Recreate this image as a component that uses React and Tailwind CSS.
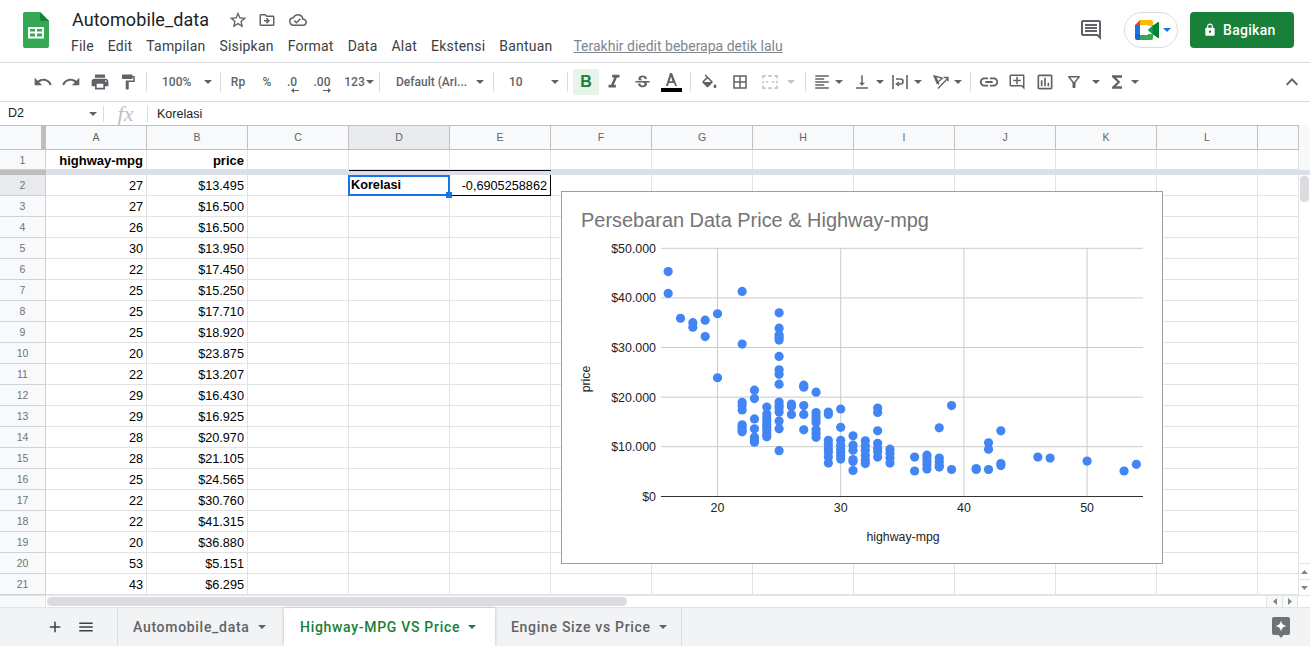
import React from 'react';
import {
  MdUndo, MdRedo, MdPrint, MdFormatPaint, MdFormatItalic, MdStrikethroughS, MdBorderAll,
  MdFormatAlignLeft, MdVerticalAlignBottom, MdLink, MdOutlineAddComment, MdOutlineAssessment,
  MdOutlineFilterAlt, MdFunctions, MdExpandLess, MdLock, MdOutlineComment, MdStarBorder,
  MdOutlineDriveFileMove, MdOutlineCloudDone, MdAdd, MdMenu,
} from 'react-icons/md';

const roboto = "font-['Roboto',sans-serif]";
const arial = "font-['Liberation_Sans',Arial,sans-serif]";

const Caret = ({ className = 'fill-[#5f6368]' }) => (
  <svg width="8" height="4" viewBox="0 0 8 4" className={`shrink-0 ${className}`}><path d="M0 0h8L4 4z" /></svg>
);
const Sep = () => <div className="w-px h-5 bg-[#dadce0] shrink-0" />;
const Slot = ({ className = '', children }) => (
  <div className={`flex items-center justify-center shrink-0 text-[#5f6368] ${className}`}>{children}</div>
);

const SheetsLogo = () => (
  <svg width="26" height="36" viewBox="0 0 26 36">
    <path d="M2 0h15l9 9v25a2 2 0 0 1-2 2H2a2 2 0 0 1-2-2V2a2 2 0 0 1 2-2z" fill="#34a853" />
    <path d="M17 0l9 9h-7a2 2 0 0 1-2-2z" fill="#188038" />
    <path d="M5 15h16v11.5H5zm2 2v2.6h5V17zm7 0v2.6h5V17zM7 21.6v2.9h5v-2.9zm7 0v2.9h5v-2.9z" fill="#fff" fillRule="evenodd" />
  </svg>
);

const MeetLogo = () => (
  <svg width="24" height="20" viewBox="0 0 24 20">
    <path d="M5 0h11a2 2 0 0 1 2 2v4h-5V5H5z" fill="#fbbc04" />
    <path d="M5 0v5H0z" fill="#ea4335" />
    <path d="M0 5h5v9H0z" fill="#1a73e8" />
    <path d="M0 14h5v6H2a2 2 0 0 1-2-2z" fill="#1967d2" />
    <path d="M5 15h8v-1h5v4a2 2 0 0 1-2 2H5z" fill="#34a853" />
    <path d="M13 10l5-4.4 5-3.6a.6.6 0 0 1 1 .5v15a.6.6 0 0 1-1 .5l-5-3.6z" fill="#00832d" />
    <path d="M13 10l5-4.400V14.400z" fill="#0f9d58" />
  </svg>
);

const Header = () => (
  <div className="h-[63px] flex border-b border-[#dadce0] shrink-0">
    <div className="w-[72px] pl-[23px] pt-[12px] shrink-0"><SheetsLogo /></div>
    <div className="flex-1 pt-[8px]">
      <div className="flex items-center h-[24px]">
        <div className={`${roboto} text-[18px] leading-[24px] tracking-[0.1px] text-[#202124] w-[155px]`}>Automobile_data</div>
        <div className="w-[22px] flex justify-center text-[#5f6368]"><MdStarBorder size={20} /></div>
        <div className="w-[36px] flex justify-center text-[#5f6368]"><MdOutlineDriveFileMove size={18} /></div>
        <div className="w-[26px] flex justify-center text-[#5f6368]"><MdOutlineCloudDone size={18} /></div>
      </div>
      <div className={`${roboto} flex items-center mt-[2px] h-[24px] text-[14px] tracking-[0.2px] text-[#3c4043] -ml-px gap-[14px]`}>
        <span>File</span><span>Edit</span><span>Tampilan</span><span>Sisipkan</span><span>Format</span>
        <span>Data</span><span>Alat</span><span>Ekstensi</span><span>Bantuan</span>
        <span className="ml-[7px] tracking-normal text-[#80868b] underline">Terakhir diedit beberapa detik lalu</span>
      </div>
    </div>
    <div className="flex items-start pt-[12px] shrink-0 pr-[16px]">
      <div className="h-[36px] flex items-center text-[#5f6368] mr-[21px]"><MdOutlineComment size={24} /></div>
      <div className="w-[54px] h-[36px] rounded-[18px] border border-[#dadce0] flex items-center pl-[10px] gap-[4px] mr-[12px]">
        <MeetLogo /><Caret className="fill-[#1a73e8]" />
      </div>
      <div className={`${roboto} w-[104px] h-[36px] rounded-[4px] bg-[#188038] text-white flex items-center pl-[13px] gap-[6px] text-[14px] font-medium tracking-[0.3px]`}>
        <MdLock size={14} /><span>Bagikan</span>
      </div>
    </div>
  </div>
);

const Toolbar = () => (
  <div className={`${roboto} h-[39px] flex items-center pl-[29px] border-b border-[#dadce0] shrink-0 text-[12px] font-medium text-[#5f6368]`}>
    <Slot className="w-[28px]"><MdUndo size={20} /></Slot>
    <Slot className="w-[28px]"><MdRedo size={20} /></Slot>
    <Slot className="w-[29px]"><MdPrint size={20} /></Slot>
    <Slot className="w-[28px] mr-[4px]"><MdFormatPaint size={18} /></Slot>
    <Sep />
    <Slot className="w-[73px] !justify-start pl-[15px] gap-[13px]"><span>100%</span><Caret /></Slot>
    <Sep />
    <Slot className="w-[34px]">Rp</Slot>
    <Slot className="w-[24px]">%</Slot>
    <Slot className="w-[26px] flex-col leading-[12px] pt-[4px]">
      <span>.0</span>
      <svg width="8" height="5" viewBox="0 0 8 5" className="fill-[#5f6368] ml-[5px]"><path d="M0 2.500L3 0v2h5v1H3v2z" /></svg>
    </Slot>
    <Slot className="w-[34px] flex-col leading-[12px] pt-[4px]">
      <span>.00</span>
      <svg width="8" height="5" viewBox="0 0 8 5" className="fill-[#5f6368] ml-[9px]"><path d="M8 2.500L5 0v2H0v1h5v2z" /></svg>
    </Slot>
    <Slot className="w-[40px] gap-[1px]"><span>123</span><Caret /></Slot>
    <Sep />
    <Slot className="w-[113px] !justify-start pl-[16px]"><span className="w-[80px]">Default (Ari...</span><Caret /></Slot>
    <Sep />
    <Slot className="w-[73px] !justify-start pl-[15px]"><span className="w-[42px]">10</span><Caret /></Slot>
    <Sep />
    <Slot className="w-[26px] h-[26px] ml-[5px] rounded-[2px] bg-[#e6f4ea] text-[#188038]">
      <span className={`${arial} text-[16px] font-bold`}>B</span>
    </Slot>
    <Slot className="w-[28px] ml-px"><MdFormatItalic size={22} /></Slot>
    <Slot className="w-[28px]"><MdStrikethroughS size={19} /></Slot>
    <Slot className="w-[28px] ml-px flex-col">
      <svg width="14" height="14" viewBox="0 0 14 14" className="fill-[#5f6368]"><path d="M6 0h2l5 13h-1.900l-1.100-3H5l-1.100 3H2zm-.4 8.300h2.800L7 3.500z" fill="#5f6368" /></svg>
      <div className="w-[21px] h-[4px] bg-black mt-[1px]" />
    </Slot>
    <div className="w-[5px] shrink-0" />
    <Sep />
    <Slot className="w-[28px] ml-[4px]">
      <svg width="18" height="18" viewBox="0 0 24 24" className="fill-[#5f6368]"><path d="M16.560 10.940 7.620 2 6.210 3.410l2.380 2.380-5.150 5.150c-.59.590-.59 1.540 0 2.120l5.500 5.500c.29.29.68.44 1.060.44s.77-.15 1.060-.44l5.500-5.500c.59-.58.59-1.530 0-2.110zM10 7.210 14.790 12H5.210zM20 14.500s-2 2.170-2 3.500c0 1.100.9 2 2 2s2-.9 2-2c0-1.330-2-3.500-2-3.500z" /></svg>
    </Slot>
    <Slot className="w-[28px] ml-[3px]"><MdBorderAll size={18} /></Slot>
    <Slot className="w-[28px] ml-[2px]">
      <svg width="16" height="14" viewBox="0 0 18 16" fill="none" stroke="#c4c5c6" strokeWidth="1.800"><path d="M1 4V1h3M7 1h4M14 1h3v3M1 6.500v3M17 6.500v3M1 12v3h3M7 15h4M14 15h3v-3M4 8h3M11 8h3" /></svg>
    </Slot>
    <Slot className="w-[14px]"><Caret className="fill-[#c4c5c6]" /></Slot>
    <div className="w-[7px] shrink-0" />
    <Sep />
    <Slot className="w-[26px] ml-[3px]"><MdFormatAlignLeft size={18} /></Slot>
    <Slot className="w-[8px] mr-[5px]"><Caret /></Slot>
    <Slot className="w-[28px]"><MdVerticalAlignBottom size={18} /></Slot>
    <Slot className="w-[8px] mr-[3px]"><Caret /></Slot>
    <Slot className="w-[26px]">
      <svg width="16" height="16" viewBox="0 0 16 16" fill="none" stroke="#5f6368" strokeWidth="1.600"><path d="M1 1v14M15 1v14M4 5h4.500a2.500 2.500 0 0 1 0 5H5" /><path d="M7 8l-2.500 2L7 12" /></svg>
    </Slot>
    <Slot className="w-[8px] ml-[1px] mr-[6px]"><Caret /></Slot>
    <Slot className="w-[26px]">
      <svg width="16" height="14" viewBox="0 0 16 14" fill="none" stroke="#5f6368" strokeWidth="1.300"><path d="M1 1l8.500 2-5.500 5zM2.500 1.500l3.500 8M5 13.500L15 3M11 2.500h4v4" /></svg>
    </Slot>
    <Slot className="w-[8px] mr-[8px]"><Caret /></Slot>
    <Sep />
    <Slot className="w-[28px] ml-[4px]"><MdLink size={22} /></Slot>
    <Slot className="w-[28px]"><MdOutlineAddComment size={18} /></Slot>
    <Slot className="w-[28px]"><MdOutlineAssessment size={20} /></Slot>
    <Slot className="w-[30px]"><MdOutlineFilterAlt size={18} /></Slot>
    <Slot className="w-[14px]"><Caret /></Slot>
    <Slot className="w-[28px]"><MdFunctions size={20} /></Slot>
    <Slot className="w-[8px]"><Caret /></Slot>
    <div className="flex-1" />
    <Slot className="w-[28px] mr-[4px]"><MdExpandLess size={24} /></Slot>
  </div>
);

const FormulaBar = () => (
  <div className={`${arial} h-[23px] flex items-center shrink-0 text-[12.5px] text-[#202124]`}>
    <div className="w-[89px] pl-[8px]">D2</div>
    <Caret />
    <div className="w-[6px]" />
    <div className="w-px h-[16px] bg-[#dadce0]" />
    <div className="w-[43px] text-center font-['Liberation_Serif',serif] italic text-[22px] leading-[20px] text-[#bdc1c6]">fx</div>
    <div className="w-px h-[16px] bg-[#dadce0]" />
    <div className="pl-[9px] pt-[1px]">Korelasi</div>
  </div>
);

const COLS = ['A', 'B', 'C', 'D', 'E', 'F', 'G', 'H', 'I', 'J', 'K', 'L'];
const mpg = [27, 27, 26, 30, 22, 25, 25, 25, 20, 22, 29, 29, 28, 28, 25, 22, 22, 20, 53, 43];
const price = ['$13.495', '$16.500', '$16.500', '$13.950', '$17.450', '$15.250', '$17.710', '$18.920', '$23.875', '$13.207', '$16.430', '$16.925', '$20.970', '$21.105', '$24.565', '$30.760', '$41.315', '$36.880', '$5.151', '$6.295'];

const cellLine = 'border-r border-b border-[#e2e3e3]';
const Cell = ({ children, className = '' }) => (
  <div className={`w-[101px] shrink-0 h-full flex items-center justify-end pr-[3px] pt-[3px] overflow-visible whitespace-nowrap ${cellLine} ${className}`}>{children}</div>
);
const Blank = ({ n }) => Array.from({ length: n }).map((_, i) => <Cell key={i} />);
const Last = () => <div className={`w-[41px] shrink-0 h-full ${cellLine}`} />;

const ColumnHeaders = () => (
  <div className={`${arial} h-[25px] flex border-t border-b border-[#c0c0c0] bg-[#f8f9fa] text-[10.5px] text-[#5f6368]`}>
    <div className="w-[46px] shrink-0 h-full flex justify-end border-r border-[#c0c0c0]">
      <div className="w-[4px] h-full bg-[#bdbdbd]" />
    </div>
    {COLS.map((c) => (
      <div key={c} className={`w-[101px] shrink-0 flex items-center justify-center border-r border-[#c0c0c0] ${c === 'D' ? 'bg-[#e8eaed]' : ''}`}>{c}</div>
    ))}
    <div className="w-[41px] shrink-0 border-r border-[#c0c0c0]" />
  </div>
);

const RowHead = ({ children, active }) => (
  <div className={`w-[46px] shrink-0 h-full flex items-center justify-center pt-[2px] border-r border-b border-[#d0d1d2] text-[10.5px] text-[#6f7378] ${active ? 'bg-[#e8eaed]' : 'bg-[#f8f9fa]'}`}>{children}</div>
);

const Grid = () => (
  <div className={`${arial} relative w-[1299px] shrink-0 h-[470px] overflow-hidden text-[12.7px] text-black`}>
    <ColumnHeaders />
    <div className="h-[20px] flex">
      <RowHead>1</RowHead>
      <Cell className="font-bold text-[13px]">highway-mpg</Cell>
      <Cell className="font-bold text-[13px]">price</Cell>
      <Blank n={10} />
      <Last />
    </div>
    <div className="h-[5px] flex">
      <div className="w-[46px] bg-[#bdbdbd]" />
      <div className="w-[303px] bg-[#dadfe8]" />
      <div className="w-[202px] bg-[#dadfe8] border-t border-black" />
      <div className="flex-1 bg-[#dadfe8]" />
    </div>
    <div className="h-[21px] flex relative">
      <RowHead active>2</RowHead>
      <Cell>27</Cell>
      <Cell>$13.495</Cell>
      <Cell />
      <Cell className="!justify-start !pl-[1px] !pt-0 font-bold relative !border-2 !border-[#1a73e8] -ml-px !w-[102px] !h-[21px]">
        Korelasi
        <div className="absolute -right-[4px] -bottom-[4px] w-[6px] h-[6px] bg-[#1a73e8] z-10" />
      </Cell>
      <Cell className="!border-r-black !border-b-black">-0,6905258862</Cell>
      <Blank n={7} />
      <Last />
    </div>
    {mpg.slice(1).map((m, i) => (
      <div key={i} className="h-[21px] flex">
        <RowHead>{i + 3}</RowHead>
        <Cell>{m}</Cell>
        <Cell>{price[i + 1]}</Cell>
        <Blank n={10} />
        <Last />
      </div>
    ))}
    <Chart />
  </div>
);

const DATA = [
  [16, [45.3, 40.9]], [17, [35.9]], [18, [35, 34.1]], [19, [35.5, 32.2]], [20, [36.8, 23.9]],
  [22, [41.3, 30.7, 18.95, 18.3, 17.4, 14.4, 13.9, 13.3, 13]],
  [23, [21.4, 19.7, 15.6, 13.6, 11.9, 11.4, 10.9]],
  [24, [18, 16.6, 15.9, 15.2, 14.5, 13.9, 13.2, 12.5, 12]],
  [25, [37, 33.9, 32.5, 32, 31.5, 28.2, 25.5, 24.6, 22.6, 19, 18.3, 17.8, 17, 15.2, 13.6, 9.2]],
  [26, [18.6, 18.1, 16.5]], [27, [22.4, 22, 18.3, 16.5, 13.4]],
  [28, [21, 16.9, 16.2, 15.5, 14.9, 13.4, 12.7, 11.9]],
  [29, [17, 16.5, 11.3, 10.5, 9.6, 8.9, 7.9, 6.7]],
  [30, [17.6, 13.9, 11.3, 10.3, 9.6, 8.9, 8.2, 7.5]],
  [31, [12.2, 10.3, 9.3, 7.4, 7, 5.2]],
  [32, [11.2, 10.2, 9.3, 8.3, 7.3, 6.6]],
  [33, [17.8, 16.9, 13.2, 10.7, 9.7, 9, 7.9]],
  [34, [9.5, 8.7, 7.7, 6.7]],
  [36, [7.9, 5.1]], [37, [8.3, 7.7, 7, 6.3, 5.5]], [38, [13.8, 7.7, 7, 6.3, 5.9]],
  [39, [18.3, 5.4]], [41, [5.6, 5.4]], [42, [10.8, 9.5, 5.4]], [43, [13.2, 6.6, 6.2]],
  [46, [7.9]], [47, [7.7]], [50, [7.1]], [53, [5.1]], [54, [6.45]],
];
const px = (m) => 717.5 + (m - 20) * 12.32;
const py = (k) => 496.3 - k * 4.96;

const Chart = () => (
  <div className="absolute left-[561px] top-[66px] w-[602px] h-[373px] bg-white border border-[#9e9e9e]">
    <svg width="600" height="371" viewBox="562 192 600 371" className={arial}>
      <text x="581" y="227" fontSize="19.95" fill="#757575">Persebaran Data Price &amp; Highway-mpg</text>
      {[10, 20, 30, 40, 50].map((k) => (
        <line key={k} x1="661" x2="1143" y1={py(k)} y2={py(k)} stroke="#cccccc" />
      ))}
      {[20, 30, 40, 50].map((m) => (
        <line key={m} x1={px(m)} x2={px(m)} y1="248" y2="496" stroke="#cccccc" />
      ))}
      <line x1="661" x2="1143" y1="496.500" y2="496.500" stroke="#333333" />
      {['$0', '$10.000', '$20.000', '$30.000', '$40.000', '$50.000'].map((t, i) => (
        <text key={t} x="656" y={py(i * 10) + 4.5} textAnchor="end" fontSize="12.4" fill="#222222">{t}</text>
      ))}
      {[20, 30, 40, 50].map((m) => (
        <text key={m} x={px(m)} y="512" textAnchor="middle" fontSize="12.4" fill="#222222">{m}</text>
      ))}
      <text x="903" y="541" textAnchor="middle" fontSize="12.3" fill="#222222">highway-mpg</text>
      <text transform="translate(590 379) rotate(-90)" textAnchor="middle" fontSize="12.3" fill="#222222">price</text>
      {DATA.flatMap(([m, ps]) => ps.map((k, i) => (
        <circle key={`${m}-${i}`} cx={px(m)} cy={py(k)} r="4.600" fill="#4285f4" />
      )))}
    </svg>
  </div>
);

const VScroll = () => (
  <div className="w-[11px] shrink-0 h-[470px] flex flex-col">
    <div className="h-[45px] bg-[#f8f9fa]" />
    <div className="h-[5px] bg-[#dadfe8]" />
    <div className="flex-1 pt-[1px] pl-[1px]">
      <div className="w-[9px] h-[26px] rounded-[4px] bg-[#dadce0]" />
    </div>
    <div className="h-[16px] flex items-center justify-center border-t border-[#e2e3e3]">
      <svg width="7" height="4" viewBox="0 0 7 4" className="fill-[#80868b]"><path d="M0 4h7L3.500 0z" /></svg>
    </div>
    <div className="h-[16px] flex items-center justify-center border-t border-[#e2e3e3]">
      <svg width="7" height="4" viewBox="0 0 7 4" className="fill-[#80868b]"><path d="M0 0h7L3.500 4z" /></svg>
    </div>
  </div>
);

const HScroll = () => (
  <div className="h-[12px] flex shrink-0 border-t border-[#e2e3e3]">
    <div className="w-[46px] bg-[#f8f9fa] shrink-0 border-r border-[#e2e3e3]" />
    <div className="w-[1220px] shrink-0 pl-px">
      <div className="w-[580px] h-[9px] mt-[1px] rounded-[5px] bg-[#dadce0]" />
    </div>
    <div className="w-[16px] flex items-center justify-center border-l border-[#e2e3e3] bg-[#f8f9fa]">
      <svg width="4" height="7" viewBox="0 0 4 7" className="fill-[#80868b]"><path d="M4 0v7L0 3.500z" /></svg>
    </div>
    <div className="w-[16px] flex items-center justify-center border-l border-r border-[#e2e3e3] bg-[#f8f9fa]">
      <svg width="4" height="7" viewBox="0 0 4 7" className="fill-[#80868b]"><path d="M0 0v7l4-3.500z" /></svg>
    </div>
  </div>
);

const Tab = ({ children, className = '', caret = 'fill-[#5f6368]' }) => (
  <div className={`h-full flex items-center shrink-0 gap-[8px] ${className}`}>
    <span>{children}</span><Caret className={caret} />
  </div>
);

const Tabs = () => (
  <div className={`${roboto} flex-1 flex bg-[#f1f3f4] border-t border-[#e2e3e3] text-[14px] font-medium tracking-[0.7px] text-[#5f6368]`}>
    <div className="w-[117px] shrink-0 flex items-center pl-[46px] gap-[13px]">
      <MdAdd size={18} className="text-[#3c4043]" />
      <MdMenu size={18} className="text-[#3c4043]" />
    </div>
    <Tab className="w-[167px] pl-[15px] border-l border-[#dadce0]">Automobile_data</Tab>
    <Tab className="w-[211px] pl-[16px] bg-white text-[#188038] shadow-[0_0_3px_rgba(60,64,67,0.3)]" caret="fill-[#188038]">Highway-MPG VS Price</Tab>
    <Tab className="w-[187px] pl-[16px] border-r border-[#dadce0]">Engine Size vs Price</Tab>
    <div className="flex-1" />
    <div className="flex items-center pr-[20px]">
      <svg width="18" height="21" viewBox="0 0 18 21">
        <path d="M2 0h14a2 2 0 0 1 2 2v14a2 2 0 0 1-2 2h-4.500L9 21l-2.500-3H2a2 2 0 0 1-2-2V2a2 2 0 0 1 2-2z" fill="#6f7276" />
        <path d="M9 3.500c.5 3.200 2 4.800 5.500 5.500-3.500.7-5 2.300-5.500 5.500-.5-3.200-2-4.800-5.500-5.500 3.500-.7 5-2.300 5.500-5.500z" fill="#fff" />
      </svg>
    </div>
  </div>
);

export default function App() {
  return (
    <div className="w-[1310px] h-[646px] overflow-hidden bg-white flex flex-col">
      <Header />
      <Toolbar />
      <FormulaBar />
      <div className="flex shrink-0">
        <Grid />
        <VScroll />
      </div>
      <HScroll />
      <Tabs />
    </div>
  );
}
